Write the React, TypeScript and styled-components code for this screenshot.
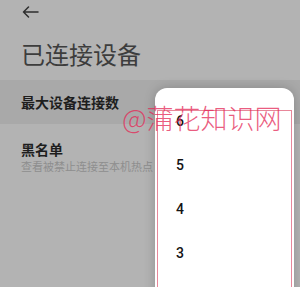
import React from 'react'
import styled, { createGlobalStyle } from 'styled-components'

const GlobalStyle = createGlobalStyle`
  html, body {
    margin: 0;
    padding: 0;
    background: #b3b3b3;
  }
  * {
    box-sizing: border-box;
  }
`

const CJK = `"Noto Sans CJK SC", "Noto Sans", sans-serif`

const Page = styled.div`
  position: relative;
  overflow: hidden;

  width: 300px;
  height: 287px;

  font-family: ${CJK};
  background: #b3b3b3;
`

const TopBar = styled.div`
  display: flex;
  align-items: center;

  height: 24px;
  padding-left: 22px;
`

const Title = styled.h1`
  margin: 18px 0 14px 21px;

  font-size: 24px;
  line-height: 24px;
  font-weight: 400;
  color: #3d3d3d;
`

const Row = styled.div<{ $active?: boolean }>`
  display: flex;
  flex-direction: column;
  justify-content: center;
  gap: 5px;

  min-height: 44px;
  padding: ${p => (p.$active ? '0' : '18px')} 0 0 21px;

  background: ${p => (p.$active ? '#a9a9a9' : 'transparent')};
`

const RowTitle = styled.div`
  font-size: 14px;
  line-height: 14px;
  font-weight: 700;
  color: #1e1e1e;
`

const RowSub = styled.div`
  font-size: 11px;
  line-height: 11px;
  color: #8e8e8e;
  white-space: nowrap;
`

const Popup = styled.div`
  position: absolute;
  left: 155px;
  top: 88px;

  display: flex;
  flex-direction: column;

  width: 139px;
  height: 240px;
  padding-top: 11px;

  background: #fff;
  border-radius: 12px;
  box-shadow: 0 0 12px rgba(0, 0, 0, 0.2);
`

const Option = styled.div`
  display: flex;
  align-items: center;

  height: 44px;
  padding-left: 21px;

  font-family: Roboto, "Noto Sans", sans-serif;
  font-size: 14px;
  font-weight: 500;
  color: #141414;
`

const Watermark = styled.div`
  position: absolute;
  left: 122px;
  top: 103px;

  font-family: ${CJK};
  font-size: 27px;
  line-height: 30px;
  font-weight: 300;
  color: rgba(228, 40, 86, 0.75);
  white-space: nowrap;
  pointer-events: none;
`

const WatermarkFrame = styled.div`
  position: absolute;
  left: 157px;
  top: 110px;

  width: 135px;
  height: 200px;

  border: 1.5px solid rgba(220, 70, 100, 0.65);
  pointer-events: none;
`

const BackArrow = () => (
  <svg width="17" height="12" viewBox="0 0 17 12" fill="none">
    <path
      d="M16 6H1.5M6.5 1L1.5 6l5 5"
      stroke="#2e2e2e"
      strokeWidth="1.5"
      strokeLinecap="round"
      strokeLinejoin="round"
    />
  </svg>
)

const options = ['6', '5', '4', '3']

export default function App() {
  return (
    <Page>
      <GlobalStyle />
      <TopBar>
        <BackArrow />
      </TopBar>
      <Title>已连接设备</Title>
      <Row $active>
        <RowTitle>最大设备连接数</RowTitle>
      </Row>
      <Row>
        <RowTitle>黑名单</RowTitle>
        <RowSub>查看被禁止连接至本机热点</RowSub>
      </Row>

      <Popup>
        {options.map(o => (
          <Option key={o}>{o}</Option>
        ))}
      </Popup>

      <WatermarkFrame />
      <Watermark>@蒲花知识网</Watermark>
    </Page>
  )
}
